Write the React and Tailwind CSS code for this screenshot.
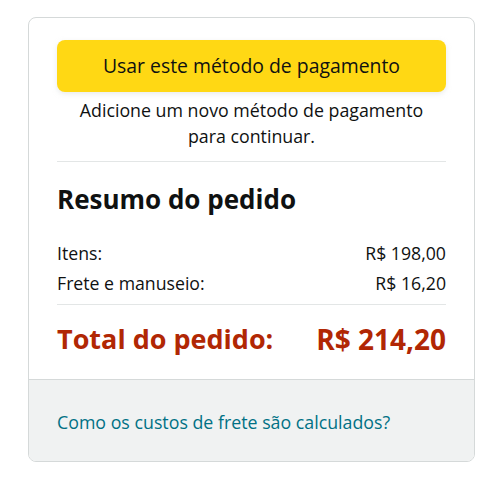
import React from 'react';

function Row({ label, value }) {
  return (
    <div className="flex items-center justify-between text-[17.7px] leading-[30px] text-[#0f1111]">
      <span>{label}</span>
      <span>{value}</span>
    </div>
  );
}

export default function App() {
  return (
    <div className="bg-white min-h-screen pt-[17px] px-[28px] font-['Open_Sans',_'Noto_Sans',_Arial,_sans-serif]">
      <div className="w-[447px] rounded-[8px] border border-[#d5d9d9] overflow-hidden">
        <div className="px-[28px] pt-[22px] pb-[22px]">
          <button className="w-full h-[52px] rounded-[8px] bg-[#ffd814] text-[19.4px] text-[#0f1111] shadow-[0_2px_5px_rgba(213,217,217,0.5)]">
            Usar este método de pagamento
          </button>
          <p className="mt-[5px] text-center text-[17.8px] leading-[26px] text-[#0f1111]">
            Adicione um novo método de pagamento
            <br />
            para continuar.
          </p>
          <div className="mt-[12px] border-t border-[#e3e6e6]" />

          <h2 className="mt-[20px] text-[26px] font-bold leading-[34px] text-[#0f1111]">Resumo do pedido</h2>

          <div className="mt-[22px]">
            <Row label="Itens:" value="R$ 198,00" />
            <Row label="Frete e manuseio:" value="R$ 16,20" />
          </div>
          <div className="mt-[6px] border-t border-[#e3e6e6]" />

          <div className="mt-[16px] flex items-center justify-between text-[27px] font-bold leading-[36px] text-[#b12704]">
            <span>Total do pedido:</span>
            <span className="text-[28px]">R$ 214,20</span>
          </div>
        </div>
        <div className="border-t border-[#d5d9d9] bg-[#f0f2f2] px-[28px] pt-[29px] pb-[26px]">
          <a href="#" className="text-[17.8px] leading-[26px] text-[#007185]">
            Como os custos de frete são calculados?
          </a>
        </div>
      </div>
    </div>
  );
}
